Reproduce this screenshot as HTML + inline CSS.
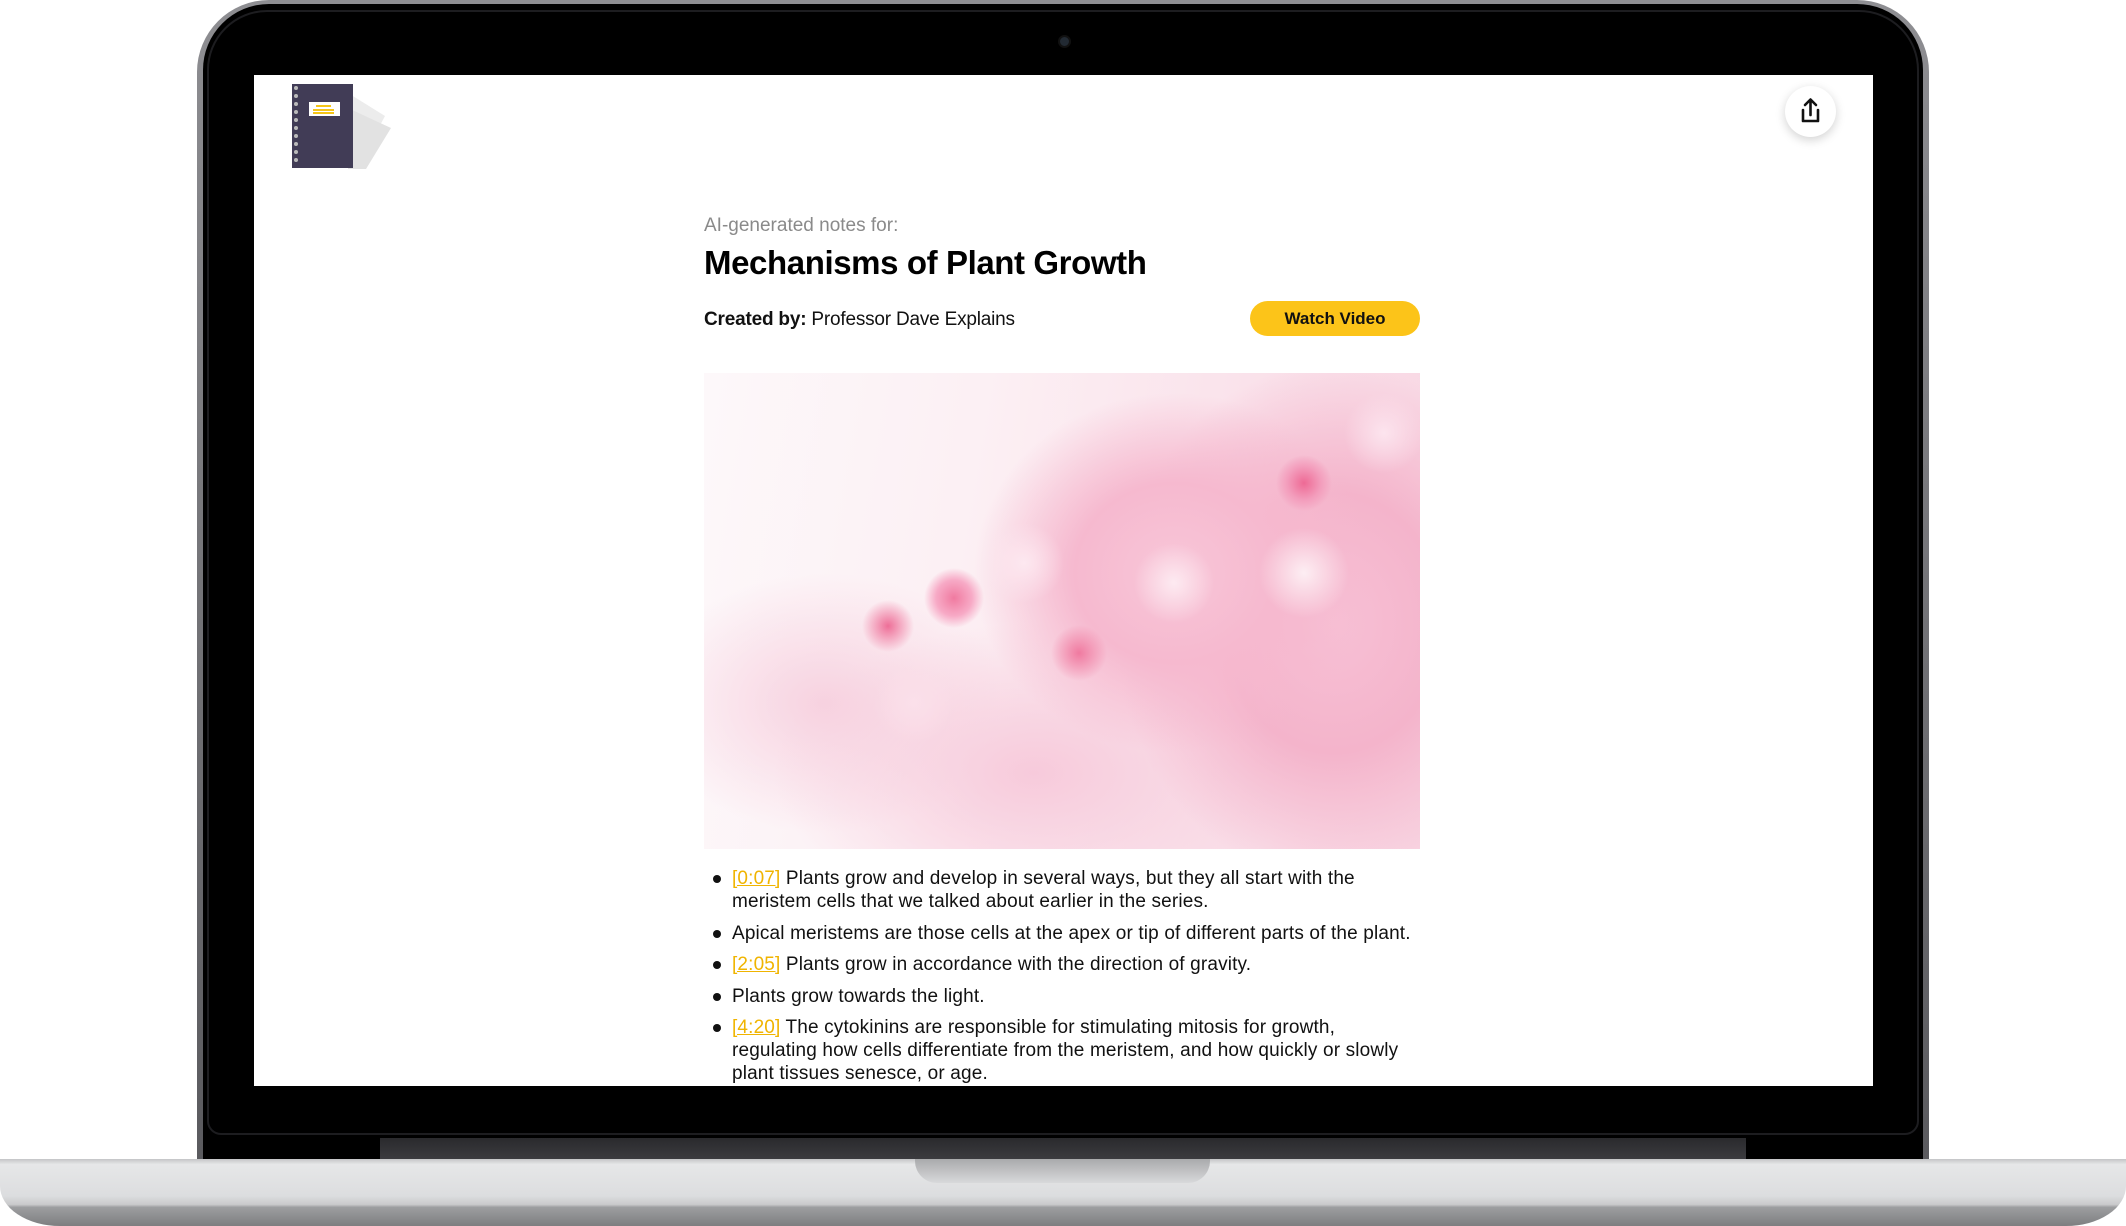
<!DOCTYPE html>
<html><head><meta charset="utf-8"><style>
*{margin:0;padding:0;box-sizing:border-box}
body{width:2126px;height:1226px;background:#fff;position:relative;overflow:hidden;font-family:"Liberation Sans",sans-serif}
.rim{position:absolute;left:197px;top:0;width:1732px;height:1175px;border-radius:72px 72px 0 0;background:linear-gradient(#8e8e92,#5a5a5e)}
.bez{position:absolute;left:203px;top:4px;width:1720px;height:1171px;border-radius:66px 66px 0 0;background:#000}
.bez2{position:absolute;left:207px;top:10px;width:1712px;height:1125px;border-radius:60px 60px 14px 14px;border:2px solid #1d1d20;background:#000}
.cam{position:absolute;left:1058px;top:35px;width:13px;height:13px;border-radius:50%;background:#222a33;border:2px solid #111}
.hinge{position:absolute;left:380px;top:1138px;width:1366px;height:22px;background:linear-gradient(#2a2a2d,#3c3c40)}
.screen{position:absolute;left:254px;top:75px;width:1619px;height:1011px;background:#fff;overflow:hidden}
.base{position:absolute;left:0;top:1159px;width:2126px;height:67px;border-radius:0 0 60px 60px/0 0 40px 40px;background:linear-gradient(#c4c5c7 0,#e6e7e8 8%,#dcdddf 55%,#c9cacb 68%,#9d9ea0 72%,#7d7e80 100%)}
.notch{position:absolute;left:915px;top:1159px;width:295px;height:24px;border-radius:0 0 22px 22px;background:linear-gradient(#a9aaac,#d8d9db)}
.col{position:absolute;left:450px;width:716px}
.t1{top:140px;font-size:19px;color:#8a8a8a}
.t2{top:169px;font-size:33px;font-weight:bold;color:#000;letter-spacing:-.4px}
.t3{top:234px;font-size:19px;color:#111;letter-spacing:-.2px}
.btn{position:absolute;left:996px;top:226px;width:170px;height:35px;border-radius:18px;background:#fcc419;font-size:17px;font-weight:bold;text-align:center;line-height:35px;color:#111}
.img{position:absolute;left:450px;top:298px;width:716px;height:476px;overflow:hidden;background:
radial-gradient(circle 28px at 600px 110px,#ee6a95 0,#f39dbc 60%,transparent 100%),
radial-gradient(circle 30px at 250px 225px,#f07aa0 0,#f7aac6 60%,transparent 100%),
radial-gradient(circle 26px at 184px 253px,#ee6f98 0,transparent 100%),
radial-gradient(circle 28px at 375px 280px,#f07aa0 0,transparent 100%),
radial-gradient(circle 40px at 320px 190px,#fde8f0 0,transparent 100%),
radial-gradient(circle 40px at 470px 210px,#fdeaf1 0,transparent 100%),
radial-gradient(circle 45px at 600px 200px,#fdeef3 0,transparent 100%),
radial-gradient(circle 40px at 210px 330px,#fbe0ea 0,transparent 100%),
radial-gradient(circle 40px at 680px 60px,#fce4ee 0,transparent 100%),
radial-gradient(ellipse 200px 180px at 470px 200px,#f8c6d8 0,#f6b9cf 50%,transparent 100%),
radial-gradient(ellipse 220px 260px at 630px 250px,#f7c0d5 0,#f4b4cb 50%,transparent 100%),
radial-gradient(ellipse 260px 150px at 330px 400px,#f7cadb 0,transparent 100%),
radial-gradient(ellipse 180px 130px at 120px 330px,#f7d2e0 0,transparent 100%),
linear-gradient(100deg,#fdf8fa 0,#fcf0f4 35%,#f8d5e2 100%)}
ul{position:absolute;left:450px;top:792px;width:716px;list-style:none;font-size:19px;line-height:23px;color:#111}
li{position:relative;padding-left:28px;margin-bottom:8.5px;letter-spacing:.15px}
li:before{content:"";position:absolute;left:9px;top:8px;width:8px;height:8px;border-radius:50%;background:#111}
a{color:#f0b400;text-decoration:underline}
.share{position:absolute;left:1531px;top:11px;width:51px;height:51px;border-radius:50%;background:#fff;box-shadow:0 3px 10px rgba(0,0,0,.18)}
</style></head><body>
<div class="rim"></div><div class="bez"></div><div class="bez2"></div>
<div class="cam"></div>
<div class="hinge"></div>
<div class="screen">
<svg style="position:absolute;left:34px;top:8px" width="110" height="90" viewBox="0 0 110 90">
<polygon points="60,10 97,33 70,84 60,84" fill="#ececec"/>
<polygon points="60,25 103,45 78,86 60,86" fill="#e2e2e2"/>
<rect x="4" y="1" width="61" height="84" fill="#413c56"/>
<rect x="21" y="19" width="31" height="14" fill="#fff"/>
<rect x="28" y="22" width="15" height="2" fill="#f5c518"/><rect x="25" y="26" width="21" height="2" fill="#f5c518"/><rect x="25" y="29" width="21" height="2" fill="#f5c518"/>
<g fill="#bbb"><circle cx="8" cy="5" r="2"/><circle cx="8" cy="13" r="2"/><circle cx="8" cy="21" r="2"/><circle cx="8" cy="29" r="2"/><circle cx="8" cy="37" r="2"/><circle cx="8" cy="45" r="2"/><circle cx="8" cy="53" r="2"/><circle cx="8" cy="61" r="2"/><circle cx="8" cy="69" r="2"/><circle cx="8" cy="77" r="2"/></g>
</svg>
<div class="share"><svg width="51" height="51" viewBox="0 0 51 51" fill="none" stroke="#111" stroke-width="2.6" stroke-linecap="round" stroke-linejoin="round"><path d="M25.5 29V14M20 19l5.5-5.5L31 19M18 24v11h15V24"/></svg></div>
<div class="col t1">AI-generated notes for:</div>
<div class="col t2">Mechanisms of Plant Growth</div>
<div class="col t3"><b>Created by:</b> Professor Dave Explains</div>
<div class="btn">Watch Video</div>
<div class="img"></div>
<ul>
<li><a>[0:07]</a> Plants grow and develop in several ways, but they all start with the meristem cells that we talked about earlier in the series.</li>
<li>Apical meristems are those cells at the apex or tip of different parts of the plant.</li>
<li><a>[2:05]</a> Plants grow in accordance with the direction of gravity.</li>
<li>Plants grow towards the light.</li>
<li><a>[4:20]</a> The cytokinins are responsible for stimulating mitosis for growth, regulating how cells differentiate from the meristem, and how quickly or slowly plant tissues senesce, or age.</li>
</ul>
</div>
<div class="base"></div><div class="notch"></div>
</body></html>
